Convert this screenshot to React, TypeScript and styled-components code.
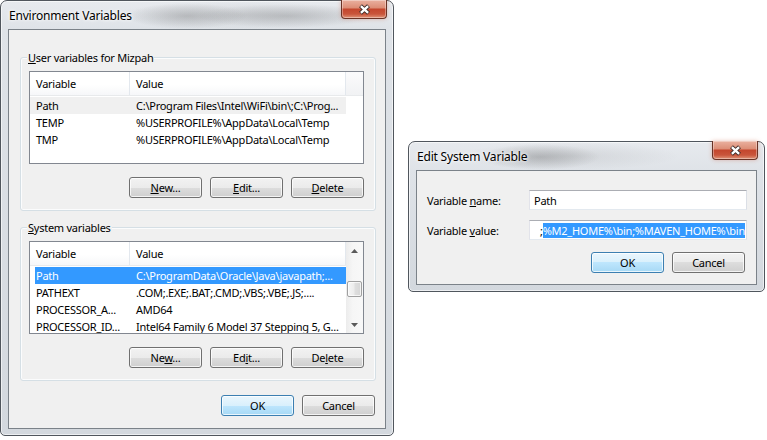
import React from "react";
import styled, { createGlobalStyle } from "styled-components";

const Global = createGlobalStyle`
  html, body { margin: 0; padding: 0; background: #fff; }
  body { font-family: "Noto Sans", "Open Sans", sans-serif; font-size: 11px; color: #000; letter-spacing: -0.25px; }
  * { box-sizing: border-box; }
`;

const Desktop = styled.div`
  width: 767px;
  height: 440px;
  display: flex;
  align-items: flex-start;
  gap: 14px;
  background: #fff;
`;

const Window = styled.div<{ $w: number; $h: number; $top?: number }>`
  position: relative;
  flex: none;
  width: ${(p) => p.$w}px;
  height: ${(p) => p.$h}px;
  margin-top: ${(p) => p.$top ?? 0}px;
  border: 1px solid #50565d;
  border-radius: 7px 7px 5px 5px;
  background: linear-gradient(180deg, #e7eaee 0px, #dfe3e8 28px, #d3d8de 100%);
  box-shadow: inset 0 0 0 1px rgba(255, 255, 255, 0.6);
  padding: 0 7px 6px;
  display: flex;
  flex-direction: column;
`;

const TitleBar = styled.div<{ $blur: string }>`
  height: 28px;
  flex: none;
  display: flex;
  align-items: center;
  font-size: 12px;
  letter-spacing: -0.2px;
  color: #000;
  background: ${(p) => p.$blur};
  margin: 0 -6px;
  padding-left: 7px;
`;

const TitleText = styled.span`
  text-shadow: 0 0 5px #fff, 0 0 3px #fff;
`;

const CloseButton = styled.div`
  position: absolute;
  top: -1px;
  right: 6px;
  width: 46px;
  height: 19px;
  border: 1px solid #6a3326;
  border-top: none;
  border-radius: 0 0 4px 4px;
  background: linear-gradient(
    180deg,
    #eab1a0 0%,
    #dd8f78 42%,
    #c4472e 52%,
    #c9553b 78%,
    #e09478 100%
  );
  box-shadow: inset 0 0 0 1px rgba(255, 255, 255, 0.35), 0 0 4px rgba(200, 80, 50, 0.35);
  display: flex;
  align-items: center;
  justify-content: center;
`;

const Client = styled.div<{ $pad: string }>`
  flex: 1;
  background: #f0f0f0;
  border: 1px solid #7b8289;
  display: flex;
  flex-direction: column;
  padding: ${(p) => p.$pad};
`;

const Groups = styled.div`
  display: flex;
  flex-direction: column;
  gap: 16px;
`;

const Group = styled.div`
  position: relative;
  height: 154px;
  border: 1px solid #d5dfe5;
  border-radius: 3px;
  box-shadow: inset 0 0 0 1px #fbfcfd;
  padding: 13px 11px 0 8px;
  display: flex;
  flex-direction: column;
`;

const Legend = styled.span`
  position: absolute;
  top: -8px;
  left: 6px;
  padding: 0 1px;
  line-height: 15px;
  background: #f0f0f0;
`;

const Key = styled.span`
  text-decoration: underline;
  text-underline-offset: 1px;
`;

const ListBox = styled.div`
  height: 93px;
  border: 1px solid #828790;
  background: #fff;
  display: flex;
  overflow: hidden;
`;

const ListMain = styled.div`
  flex: 1;
  min-width: 0;
  display: flex;
  flex-direction: column;
`;

const Header = styled.div`
  height: 24px;
  flex: none;
  display: flex;
  border-bottom: 1px solid #e8eaec;
  background: linear-gradient(180deg, #ffffff 0%, #ffffff 55%, #f6f7f9 100%);
`;

const HeaderCell = styled.div<{ $w?: number }>`
  width: ${(p) => (p.$w ? `${p.$w}px` : "auto")};
  flex: ${(p) => (p.$w ? "none" : 1)};
  border-right: ${(p) => (p.$w ? "1px solid #e3e8ee" : "none")};
  background: ${(p) => (p.$w ? "transparent" : "linear-gradient(180deg, #fbfbfc, #f1f2f4)")};
  padding-left: 6px;
  display: flex;
  align-items: center;
  padding-bottom: 1px;
`;

const Rows = styled.div`
  padding-top: 1px;
  display: flex;
  flex-direction: column;
`;

const Row = styled.div<{ $state?: "focus" | "selected" }>`
  width: 316px;
  height: 17px;
  display: grid;
  grid-template-columns: 100px 216px;
  color: ${(p) => (p.$state === "selected" ? "#fff" : "#000")};
  background: ${(p) =>
    p.$state === "selected"
      ? "linear-gradient(90deg, transparent 5px, #3399ff 5px)"
      : p.$state === "focus"
      ? "#f0f0f0"
      : "transparent"};
`;

const Cell = styled.div`
  padding-left: 6px;
  line-height: 17px;
  white-space: nowrap;
  overflow: hidden;
`;

const ScrollBar = styled.div`
  width: 17px;
  flex: none;
  display: flex;
  flex-direction: column;
  background: linear-gradient(90deg, #ececec 0%, #f6f6f6 40%, #f8f8f8 100%);
`;

const ScrollArrow = styled.div`
  height: 17px;
  flex: none;
  display: flex;
  align-items: center;
  justify-content: center;
`;

const ScrollTrack = styled.div`
  flex: 1;
  padding-top: 22px;
  display: flex;
  justify-content: center;
`;

const Thumb = styled.div`
  width: 15px;
  height: 16px;
  border: 1px solid #a0a0a0;
  border-radius: 2px;
  background: linear-gradient(90deg, #f6f6f6 0%, #ececec 45%, #dedede 55%, #d6d6d6 100%);
  box-shadow: inset 0 0 0 1px rgba(255, 255, 255, 0.7);
`;

const ButtonRow = styled.div<{ $mt: number; $pr?: number }>`
  margin-top: ${(p) => p.$mt}px;
  padding-right: ${(p) => p.$pr ?? 0}px;
  display: flex;
  justify-content: flex-end;
  gap: 8px;
`;

const Button = styled.button<{ $default?: boolean }>`
  width: 73px;
  height: 21px;
  padding: 0 0 1px;
  font: inherit;
  font-size: 11px;
  letter-spacing: -0.25px;
  color: #000;
  border: 1px solid ${(p) => (p.$default ? "#3c7fb1" : "#707070")};
  border-radius: 3px;
  background: ${(p) =>
    p.$default
      ? "linear-gradient(180deg, #eaf6fd 0%, #d9f0fc 50%, #bee6fd 50%, #a7d9f5 100%)"
      : "linear-gradient(180deg, #f2f2f2 0%, #ebebeb 50%, #dddddd 50%, #cfcfcf 100%)"};
  box-shadow: inset 0 0 0 1px rgba(255, 255, 255, 0.75);
`;

const FieldRows = styled.div`
  display: flex;
  flex-direction: column;
  gap: 10px;
`;

const FieldRow = styled.div`
  height: 20px;
  display: flex;
  align-items: center;
`;

const FieldLabel = styled.label`
  width: 102px;
  flex: none;
`;

const TextBox = styled.div<{ $end?: boolean }>`
  flex: 1;
  height: 20px;
  background: #fff;
  border: 1px solid;
  border-color: #abadb3 #dbdfe6 #e3e9ef #e2e3ea;
  display: flex;
  align-items: center;
  justify-content: ${(p) => (p.$end ? "flex-end" : "flex-start")};
  padding: ${(p) => (p.$end ? "0 1px 0 4px" : "0 3px 0 4px")};
  overflow: hidden;
  white-space: nowrap;
`;

const Selection = styled.span`
  background: #3399ff;
  color: #fff;
  line-height: 15px;
`;

const CloseGlyph = () => (
  <svg width="13" height="11" viewBox="0 0 13 11">
    <path d="M2.5 1.8 L10.5 9.2 M10.5 1.8 L2.5 9.2" stroke="#3b2b28" strokeWidth="4.2" />
    <path d="M2.9 2.2 L10.1 8.8 M10.1 2.2 L2.9 8.8" stroke="#ffffff" strokeWidth="2.4" />
  </svg>
);

const Arrow = ({ down }: { down?: boolean }) => (
  <svg width="7" height="4" viewBox="0 0 7 4">
    <path d={down ? "M0 0 H7 L3.5 4 Z" : "M0 4 H7 L3.5 0 Z"} fill="#5a5a5a" />
  </svg>
);

type VarRow = { name: string; value: string; state?: "focus" | "selected" };

const userVars: VarRow[] = [
  { name: "Path", value: "C:\\Program Files\\Intel\\WiFi\\bin\\;C:\\Prog...", state: "focus" },
  { name: "TEMP", value: "%USERPROFILE%\\AppData\\Local\\Temp" },
  { name: "TMP", value: "%USERPROFILE%\\AppData\\Local\\Temp" },
];

const sysVars: VarRow[] = [
  { name: "Path", value: "C:\\ProgramData\\Oracle\\Java\\javapath;...", state: "selected" },
  { name: "PATHEXT", value: ".COM;.EXE;.BAT;.CMD;.VBS;.VBE;.JS;...." },
  { name: "PROCESSOR_A...", value: "AMD64" },
  { name: "PROCESSOR_ID...", value: "Intel64 Family 6 Model 37 Stepping 5, G..." },
];

const VarList = ({ rows, scroll }: { rows: VarRow[]; scroll?: boolean }) => (
  <ListBox>
    <ListMain>
      <Header>
        <HeaderCell $w={100}>Variable</HeaderCell>
        <HeaderCell $w={216}>Value</HeaderCell>
        {!scroll && <HeaderCell />}
      </Header>
      <Rows>
        {rows.map((r) => (
          <Row key={r.name} $state={r.state}>
            <Cell>{r.name}</Cell>
            <Cell>{r.value}</Cell>
          </Row>
        ))}
      </Rows>
    </ListMain>
    {scroll && (
      <ScrollBar>
        <ScrollArrow>
          <Arrow />
        </ScrollArrow>
        <ScrollTrack>
          <Thumb />
        </ScrollTrack>
        <ScrollArrow>
          <Arrow down />
        </ScrollArrow>
      </ScrollBar>
    )}
  </ListBox>
);

const leftBlur =
  "radial-gradient(ellipse 60px 13px at 185px 15px, rgba(60,60,60,0.22), transparent), radial-gradient(ellipse 90px 12px at 285px 15px, rgba(60,60,60,0.2), transparent), radial-gradient(ellipse 130px 14px at 240px 14px, rgba(90,90,90,0.12), transparent)";
const rightBlur =
  "radial-gradient(ellipse 60px 13px at 130px 15px, rgba(60,60,60,0.24), transparent), radial-gradient(ellipse 110px 14px at 160px 14px, rgba(90,90,90,0.12), transparent)";

export default function App() {
  return (
    <>
      <Global />
      <Desktop>
        <Window $w={394} $h={436}>
          <TitleBar $blur={leftBlur}>
            <TitleText>Environment Variables</TitleText>
          </TitleBar>
          <CloseButton>
            <CloseGlyph />
          </CloseButton>
          <Client $pad="27px 9px 0 11px">
            <Groups>
              <Group>
                <Legend>
                  <Key>U</Key>ser variables for Mizpah
                </Legend>
                <VarList rows={userVars} />
                <ButtonRow $mt={13}>
                  <Button>
                    <Key>N</Key>ew...
                  </Button>
                  <Button>
                    <Key>E</Key>dit...
                  </Button>
                  <Button>
                    <Key>D</Key>elete
                  </Button>
                </ButtonRow>
              </Group>
              <Group>
                <Legend>
                  <Key>S</Key>ystem variables
                </Legend>
                <VarList rows={sysVars} scroll />
                <ButtonRow $mt={13}>
                  <Button>
                    Ne<Key>w</Key>...
                  </Button>
                  <Button>
                    Ed<Key>i</Key>t...
                  </Button>
                  <Button>
                    De<Key>l</Key>ete
                  </Button>
                </ButtonRow>
              </Group>
            </Groups>
            <ButtonRow $mt={14} $pr={1}>
              <Button $default>OK</Button>
              <Button>Cancel</Button>
            </ButtonRow>
          </Client>
        </Window>

        <Window $w={357} $h={151} $top={141}>
          <TitleBar $blur={rightBlur}>
            <TitleText>Edit System Variable</TitleText>
          </TitleBar>
          <CloseButton>
            <CloseGlyph />
          </CloseButton>
          <Client $pad="19px 9px 0 10px">
            <FieldRows>
              <FieldRow>
                <FieldLabel>
                  Variable <Key>n</Key>ame:
                </FieldLabel>
                <TextBox>Path</TextBox>
              </FieldRow>
              <FieldRow>
                <FieldLabel>
                  Variable <Key>v</Key>alue:
                </FieldLabel>
                <TextBox $end>
                  ;<Selection>%M2_HOME%\bin;%MAVEN_HOME%\bin</Selection>
                </TextBox>
              </FieldRow>
            </FieldRows>
            <ButtonRow $mt={12} $pr={2}>
              <Button $default>OK</Button>
              <Button>Cancel</Button>
            </ButtonRow>
          </Client>
        </Window>
      </Desktop>
    </>
  );
}
